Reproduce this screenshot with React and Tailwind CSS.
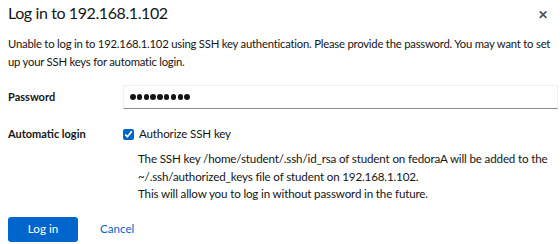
import { useState } from "react";

const FONT = { fontFamily: 'Lato, "Noto Sans", sans-serif' };

function App() {
    const [authorize, setAuthorize] = useState(true);
    const passwordLength = 9;

    return (
        <div className="w-[560px] h-[244px] bg-white text-[#151515] overflow-hidden" style={FONT}>
            <div className="flex items-start justify-between pl-2 pr-3 pt-[1px]">
                <h1 className="text-[16px] leading-[24px] font-normal tracking-[-0.4px]">Log in to 192.168.1.102</h1>
                <button className="mt-[8px] text-[#4f5255] text-[12px] font-bold leading-none">✕</button>
            </div>

            <p className="pl-2 mt-[10px] text-[11.3px] leading-[18px] tracking-[-0.22px] whitespace-nowrap">
                Unable to log in to 192.168.1.102 using SSH key authentication. Please provide the password. You may want to set
                <br />
                up your SSH keys for automatic login.
            </p>

            <div className="grid grid-cols-[115px_1fr] pl-2 pr-[2px] mt-[14px] gap-y-[18px] items-center">
                <label className="text-[11px] font-bold">Password</label>
                <div className="h-[24px] border border-[#f0f0f0] border-b-[#8a8d90] flex items-center gap-[1.3px] pl-[6px]">
                    {Array.from({ length: passwordLength }).map((_, i) => (
                        <span key={i} className="w-[5.5px] h-[5.5px] rounded-full bg-[#151515]" />
                    ))}
                </div>

                <label className="text-[11px] font-bold self-start leading-[14px]">Automatic login</label>
                <div className="text-[11.6px] tracking-[-0.15px]">
                    <label className="flex items-center gap-[5px] leading-[14px]">
                        <input
                            type="checkbox"
                            checked={authorize}
                            onChange={(e) => setAuthorize(e.target.checked)}
                            className="w-[11px] h-[11px] m-0 accent-[#0066cc]"
                        />
                        Authorize SSH key
                    </label>
                    <div className="pl-[15px] mt-[9px] leading-[17.5px] whitespace-nowrap">
                        <p>The SSH key /home/student/.ssh/id_rsa of student on fedoraA will be added to the</p>
                        <p>~/.ssh/authorized_keys file of student on 192.168.1.102.</p>
                        <p>This will allow you to log in without password in the future.</p>
                    </div>
                </div>
            </div>

            <div className="flex items-center gap-[22px] pl-2 mt-[14px]">
                <button className="w-[70px] h-[25px] rounded-[3px] bg-[#0066cc] text-white text-[11.6px]">Log in</button>
                <button className="text-[#0066cc] text-[11.6px]">Cancel</button>
            </div>
        </div>
    );
}

export default App;
